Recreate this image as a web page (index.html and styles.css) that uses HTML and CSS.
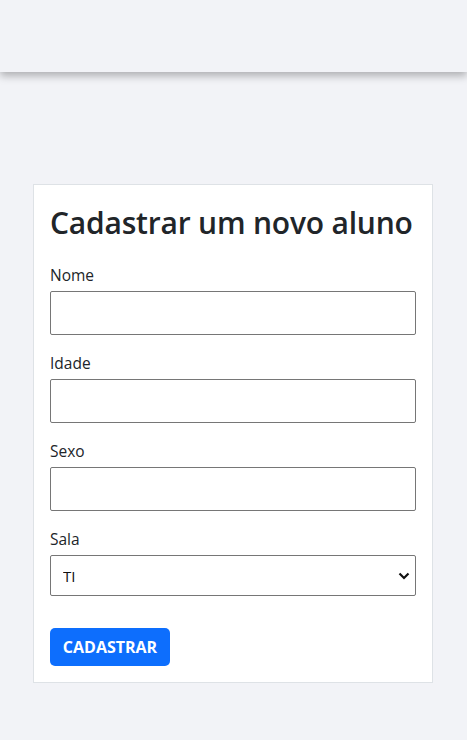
FILE: index.html
```html
<!DOCTYPE html>
<html lang="pt">
<head>
<meta charset="utf-8">
<title>Cadastrar aluno</title>
<link rel="stylesheet" href="styles.css">
</head>
<body>
<header class="topbar"></header>
<main class="page">
  <form class="card">
    <h1 class="title">Cadastrar um novo aluno</h1>
    <div class="group">
      <label class="label" for="nome">Nome</label>
      <input class="field" id="nome" type="text">
    </div>
    <div class="group">
      <label class="label" for="idade">Idade</label>
      <input class="field" id="idade" type="text">
    </div>
    <div class="group">
      <label class="label" for="sexo">Sexo</label>
      <input class="field" id="sexo" type="text">
    </div>
    <div class="group">
      <label class="label" for="sala">Sala</label>
      <div class="select-wrap">
        <select class="field select" id="sala">
          <option>TI</option>
        </select>
        <svg class="chev" width="12" height="8" viewBox="0 0 12 8"><path d="M1.5 1.5 L6 6 L10.5 1.5" fill="none" stroke="#111" stroke-width="2.2"/></svg>
      </div>
    </div>
    <button class="btn" type="button">CADASTRAR</button>
  </form>
</main>
</body>
</html>
```
FILE: styles.css
```css
* { box-sizing: border-box; }
html, body { margin: 0; padding: 0; }
body {
  background: #f2f3f7;
  font-family: "Open Sans", "Noto Sans", sans-serif;
  color: #212529;
}
.topbar {
  height: 72px;
  background: #f2f3f7;
  box-shadow: 0 4px 8px rgba(0,0,0,0.28);
  position: relative;
}
.page {
  padding: 112px 33px 40px 33px;
}
.card {
  width: 400px;
  background: #fff;
  border: 1px solid #dee2e6;
  padding: 16px 16px 16px 16px;
}
.title {
  margin: 0 0 18px 0;
  font-size: 30px;
  font-weight: 600;
  line-height: 44px;
  letter-spacing: -0.2px;
}
.group { margin-bottom: 16px; }
.label {
  display: block;
  font-size: 15.5px;
  line-height: 24px;
  margin-bottom: 4px;
}
.field {
  display: block;
  width: 366px;
  height: 44px;
  border: 1px solid #767676;
  border-radius: 2px;
  background: #fff;
  font-family: "Open Sans", sans-serif;
  font-size: 15px;
  padding: 0 12px;
}
.select-wrap { position: relative; width: 366px; }
.select {
  height: 41px;
  appearance: none;
  -webkit-appearance: none;
  color: #111;
}
.chev { position: absolute; right: 6px; top: 17px; }
.btn {
  margin-top: 16px;
  width: 120px;
  height: 38px;
  background: #0d6efd;
  color: #fff;
  border: none;
  border-radius: 5px;
  font-family: "Open Sans", sans-serif;
  font-weight: 700;
  font-size: 16px;
  padding: 0;
}
```
